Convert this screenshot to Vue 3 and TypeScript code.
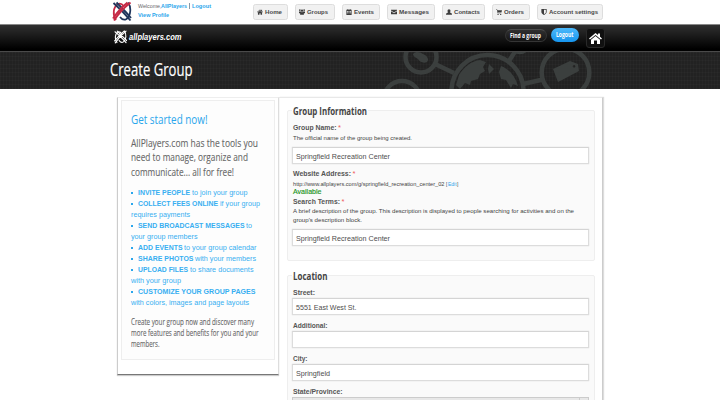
<script setup lang="ts">
import { h, type FunctionalComponent } from 'vue'

const Fit: FunctionalComponent<{ t: string; w: number; lh?: number }> = (p) => {
  const lh = p.lh ?? 11
  return h('svg', { class: 'fit', width: p.w, height: lh, overflow: 'visible' }, [
    h('text', { x: 0, y: lh - 3, textLength: p.w, lengthAdjust: 'spacingAndGlyphs' }, p.t),
  ])
}
Fit.props = ['t', 'w', 'lh']

interface NavItem { label: string; w: number; box: number; icon: string }
const nav: NavItem[] = [
  { label: 'Home', w: 17, box: 35, icon: 'M8 1 0 8l1 1.2L8 3l7 6.2L16 8l-2.500-2.200V2h-2v2ZM8 4.500l-5.500 5V15h4v-4h3v4h4V9.500Z' },
  { label: 'Groups', w: 21, box: 40, icon: 'M5 4.500a3 3 0 1 1 6 0 3 3 0 0 1-6 0ZM0 3.500a2.300 2.300 0 1 1 4.500 0 2.300 2.300 0 0 1-4.500 0ZM11.500 3.500a2.300 2.300 0 1 1 4.500 0 2.300 2.300 0 0 1-4.500 0ZM0 6.500h5l2 2h2l2-2h5V11h-3v4H3v-4H0Z' },
  { label: 'Events', w: 20, box: 38, icon: 'M1 2h3V0h2v2h4V0h2v2h3v14H1ZM2.500 6v2h3V6Zm4 0v2h3V6Zm4 0v2h3V6Zm-8 3.500v2h3v-2Zm4 0v2h3v-2Zm4 0v2h3v-2Z' },
  { label: 'Messages', w: 30, box: 48, icon: 'M0 2h16v2L8 9 0 4ZM0 6l8 5 8-5v8H0Z' },
  { label: 'Contacts', w: 26, box: 43, icon: 'M4 4.500a4 4 0 1 1 8 0c0 2-1 4-2 4.500 4 1 6 2 6 6H0c0-4 2-5 6-6-1-.5-2-2.500-2-4.500Z' },
  { label: 'Orders', w: 20, box: 38, icon: 'M0 1h3l1 2h12l-1.500 6.500H5.500l.3 1.500H14v1H4.500L2.500 2.500H0ZM4 13h3v3H4Zm7 0h3v3h-3Z' },
  { label: 'Account settings', w: 49, box: 66, icon: 'M1 0h14v8c0 4-4 6.500-7 8-3-1.500-7-4-7-8ZM8 2v11.500c3-1.500 5-3 5-5.500V2Z' },
]

interface Perk { bold: string; bw: number; rest: string; rw: number; next?: string; nw?: number }
const perks: Perk[] = [
  { bold: 'INVITE PEOPLE', bw: 52, rest: 'to join your group', rw: 55.5 },
  { bold: 'COLLECT FEES ONLINE', bw: 80, rest: 'if your group', rw: 40, next: 'requires payments', nw: 59 },
  { bold: 'SEND BROADCAST MESSAGES', bw: 106.5, rest: 'to', rw: 6, next: 'your group members', nw: 66.5 },
  { bold: 'ADD EVENTS', bw: 44.5, rest: 'to your group calendar', rw: 72.5 },
  { bold: 'SHARE PHOTOS', bw: 55.5, rest: 'with your members', rw: 61 },
  { bold: 'UPLOAD FILES', bw: 50, rest: 'to share documents', rw: 63.5, next: 'with your group', nw: 50 },
  { bold: 'CUSTOMIZE YOUR GROUP PAGES', bw: 117.5, rest: '', rw: 0, next: 'with colors, images and page layouts', nw: 118 },
]

interface Address { label: string; lw: number; value: string; vw: number }
const address: Address[] = [
  { label: 'Street:', lw: 22, value: '5551 East West St.', vw: 60.5 },
  { label: 'Additional:', lw: 34.5, value: '', vw: 0 },
  { label: 'City:', lw: 14.5, value: 'Springfield', vw: 34 },
]
</script>

<template>
  <div class="page">
    <div class="top">
      <svg class="emblem" viewBox="0 0 40 42">
        <g fill="none">
          <path d="M8 38C1 28 2 12 12 6c5-2 9 1 12 5" stroke="#c62a46" stroke-width="3.500" />
          <path d="M32 3c7 9 6 26-3 33-5 3-10 0-13-4" stroke="#20365c" stroke-width="3.500" />
          <path d="M3 4c9 8 24 23 34 35M9 3c8 8 21 21 29 31" stroke="#20365c" stroke-width="3.800" />
          <path d="M37 3C26 12 13 25 4 39M31 3C21 11 10 23 2 35" stroke="#c62a46" stroke-width="3.800" />
        </g>
      </svg>
      <div class="user">
        <div class="row"><Fit t="Welcome," :w="23.5" :lh="9" /><Fit class="link" t="AllPlayers" :w="26" :lh="9" /><span class="sep" /><Fit class="link" t="Logout" :w="19" :lh="9" /></div>
        <Fit class="link" t="View Profile" :w="31" :lh="9" />
      </div>
      <nav class="nav">
        <a v-for="n in nav" :key="n.label" class="tab" :style="{ width: n.box + 'px' }">
          <svg class="glyph" viewBox="0 0 16 16"><path :d="n.icon" fill-rule="evenodd" /></svg>
          <Fit :t="n.label" :w="n.w" :lh="9" />
        </a>
      </nav>
    </div>

    <header class="brand">
      <svg class="mark" viewBox="0 0 40 42">
        <g fill="none" stroke="#fff" stroke-width="3.500" stroke-linecap="round">
          <path d="M9 38C2 29 2 12 12 6c5-2 9 1 12 5M32 3c7 9 6 26-3 33-5 3-10 0-13-4" />
          <path d="M3 5c9 7 24 22 34 33M10 3c8 8 20 19 29 29M37 3C26 12 13 25 4 39M31 3C21 11 10 23 2 33" />
        </g>
      </svg>
      <Fit class="wordmark" t="allplayers.com" :w="52.5" :lh="12" />
      <div class="actions">
        <a class="pill dark"><Fit t="Find a group" :w="31" /></a>
        <a class="pill blue"><Fit t="Logout" :w="17.5" /></a>
        <a class="home">
          <svg width="13" height="11" viewBox="0 0 26 22" fill="#fff"><path d="M13 0 0 11l2 2L13 4l11 9 2-2-4-3.500V1h-4v3ZM13 6 4 13.500V22h6v-7h6v7h6v-8.500Z" /></svg>
        </a>
      </div>
    </header>

    <div class="hero">
      <Fit class="title" t="Create Group" :w="82.5" :lh="20" />
      <svg class="network" width="220" height="37" viewBox="380 52 220 37">
        <g fill="none" stroke="#3b3f3e" stroke-width="4.500">
          <circle cx="421" cy="57" r="15.500" />
          <circle cx="402" cy="99" r="18" />
          <circle cx="487.500" cy="91" r="36" />
          <circle cx="565.500" cy="72.500" r="23.800" />
          <circle cx="520" cy="44" r="8" />
          <path d="M435 64l19 9M509 61l7-11M523 84l20-4.500" />
        </g>
        <g fill="#3b3f3e">
          <path d="M413 54c4-4 8-1 12 1 3 2 4 5 2 7-4 2-8-1-9-3-2-1-5-3-5-5Z" />
          <path d="M459 75c5-8 12-14 21-15l6 2-3 5 2 4-5 3-2 5-7 2-1 4-5-2-5 6-4-4Z" />
          <path d="M489 64l5 5-5 5-1-5ZM501 66c8 3 14 10 17 20l-5-2-2 4-5-8-5-1-2-7Z" />
          <path fill-rule="evenodd" d="M553 69l17-8 8 3 1 7-17 9-4 2Zm21-4a1.300 1.300 0 1 0 .1 0Z" />
        </g>
      </svg>
    </div>

    <main class="body">
      <aside class="side">
        <div class="inner">
          <Fit class="started" t="Get started now!" :w="76.5" :lh="16" />
          <div class="intro">
            <Fit t="AllPlayers.com has the tools you" :w="127" :lh="14.600" />
            <Fit t="need to manage, organize and" :w="117" :lh="14.600" />
            <Fit t="communicate... all for free!" :w="103" :lh="14.600" />
          </div>
          <ul class="perks">
            <li v-for="p in perks" :key="p.bold">
              <div class="row"><i class="dot" /><Fit class="b" :t="p.bold" :w="p.bw" /><Fit v-if="p.rest" class="rest" :t="p.rest" :w="p.rw" /></div>
              <Fit v-if="p.next" :t="p.next" :w="p.nw ?? 0" />
            </li>
          </ul>
          <div class="outro">
            <Fit t="Create your group now and discover many" :w="123" />
            <Fit t="more features and benefits for you and your" :w="127.5" />
            <Fit t="members." :w="28.5" />
          </div>
        </div>
      </aside>

      <section class="form">
        <div class="set info">
          <div class="legend"><Fit t="Group Information" :w="74" :lh="12" /></div>
          <div class="row label first"><Fit t="Group Name:" :w="43.5" :lh="10" /><span class="star">*</span></div>
          <Fit class="hint" t="The official name of the group being created." :w="119" :lh="10" />
          <div class="input name"><Fit t="Springfield Recreation Center" :w="94" /></div>
          <div class="row label web"><Fit t="Website Address:" :w="58" :lh="10" /><span class="star">*</span></div>
          <div class="row hint"><Fit t="http://www.allplayers.com/g/springfield_recreation_center_02" :w="151.500" :lh="9.500" /><Fit class="open" t="[" :w="1.300" :lh="9.500" /><Fit class="edit" t="Edit" :w="8.500" :lh="9.500" /><Fit class="close" t="]" :w="1.300" :lh="9.500" /></div>
          <Fit class="ok" t="Available" :w="28.5" :lh="9" />
          <div class="row label"><Fit t="Search Terms:" :w="47" :lh="9.500" /><span class="star">*</span></div>
          <Fit class="hint" t="A brief description of the group. This description is displayed to people searching for activities and on the" :w="281" :lh="9.300" />
          <Fit class="hint" t="group's description block." :w="69" :lh="9.300" />
          <div class="input terms"><Fit t="Springfield Recreation Center" :w="94" /></div>
        </div>

        <div class="set place">
          <div class="legend"><Fit t="Location" :w="34.5" :lh="12" /></div>
          <div class="fields">
            <div v-for="a in address" :key="a.label" class="field">
              <Fit class="label" :t="a.label" :w="a.lw" :lh="10" />
              <div class="input"><Fit v-if="a.value" :t="a.value" :w="a.vw" /></div>
            </div>
            <div class="field">
              <Fit class="label" t="State/Province:" :w="49.5" :lh="10" />
              <div class="select"><span class="arrow" /></div>
            </div>
          </div>
        </div>
      </section>
    </main>
  </div>
</template>

<style>
body { margin: 0; overflow: hidden; background: #fff; }
</style>

<style scoped>
.page { width: 720px; height: 400px; overflow: hidden; background: #fff; font-family: "Liberation Sans", Arial, sans-serif; color: #555; box-sizing: border-box; }
.page * { box-sizing: border-box; }
.fit { display: block; flex: none; fill: currentColor; overflow: visible; }
.row { display: flex; }

.top { height: 24px; display: flex; padding-left: 112px; }
.emblem { width: 20px; height: 21px; margin-top: 1px; flex: none; }
.user { font-size: 5.8px; padding: 2.200px 0 0 5.500px; width: 121px; color: #666; flex: none; }
.link { color: #2ba6ec; font-weight: bold; }
.sep { width: 1px; height: 6px; background: #8899a8; margin: 1px 2px 0 2px; }
.nav { display: flex; gap: 7px; padding-top: 4px; flex: none; }
.tab { height: 16px; display: flex; align-items: center; padding-left: 3px; gap: 2px; background: #f1f1f1; border: 1px solid #ddd; border-radius: 2.500px; font-size: 6.200px; font-weight: bold; color: #484848; }
.glyph { width: 6px; height: 6px; fill: #3c3c3c; flex: none; }

.brand { height: 27px; border-top: 1px solid #888; background: linear-gradient(#303030, #000 92%); display: flex; padding-left: 114px; }
.mark { width: 13px; height: 14px; margin-top: 5px; }
.wordmark { margin: 6px 0 0 2px; font-size: 8.800px; font-weight: bold; font-style: italic; color: #fff; }
.actions { display: flex; margin-left: 323px; padding-top: 3px; }
.pill { font-family: "Open Sans", sans-serif; font-weight: bold; font-size: 7px; color: #fff; display: flex; justify-content: center; align-items: center; border-radius: 8px; }
.pill .fit { margin-top: -1px; }
.dark { width: 42px; height: 13px; margin-top: 1px; background: linear-gradient(#303030, #151515); border: 1px solid #353535; border-top-color: #4a4a4a; }
.blue { width: 28px; height: 14px; margin: 0 0 0 4.500px; background: linear-gradient(#4cb9fb, #1695ee); }
.home { width: 19px; height: 20px; margin-left: 7px; border: 1px solid #292929; border-radius: 3px; background: #101010; display: flex; align-items: center; justify-content: center; }

.hero { height: 38px; border-top: 1px solid #4a4a4a; display: flex; padding-left: 110px; overflow: hidden; background: repeating-linear-gradient(90deg, #ffffff05 0 1px, transparent 1px 3px), repeating-linear-gradient(#ffffff05 0 1px, transparent 1px 4px), #222; }
.title { margin-top: 6.600px; font-family: "Open Sans", sans-serif; font-size: 18px; color: #fff; stroke: #fff; stroke-width: .2px; }
.network { margin-left: 187.500px; flex: none; }

.body { display: flex; align-items: flex-start; padding: 8px 0 0 117px; }
.side { width: 162px; height: 278px; padding: 2px 3px 0; border: 1px solid #ddd; border-top-color: #eee; border-left-color: #ccc; border-bottom: 1.500px solid #777; box-shadow: 0 1px 1px #ccc; background: #fff; }
.inner { height: 260px; border: 1px solid #eee; background: #fdfdfd; padding: 9.500px 0 0 9px; font-family: "Open Sans", sans-serif; }
.started { font-size: 13px; color: #2ba6ec; }
.intro { padding-top: 8.200px; font-size: 10.800px; color: #666; stroke: #666; stroke-width: .1px; }
.perks { list-style: none; margin: 0; padding: 8.600px 0 0; font-family: "Liberation Sans", sans-serif; font-size: 7.300px; color: #38aff1; }
.dot { width: 2px; height: 2px; background: #2ba6ec; margin: 5px 4.500px 0 0; }
.b { font-weight: bold; }
.rest { margin-left: 2.300px; }
.outro { padding-top: 8.500px; font-size: 8.200px; color: #666; stroke: #666; stroke-width: .1px; }

.form { width: 324px; height: 400px; border: 1px solid #e8e8e8; border-left: 0; border-right: 1px solid #ccc; box-shadow: 1px 0 1px #ddd; padding: 12px 0 0 8px; }
.set { width: 308px; border: 1px solid #eee; border-radius: 2px; background: #fafafa; padding: 0 5px 0 4px; }
.info { height: 151px; }
.place { height: 160px; margin-top: 14px; }
.legend { width: max-content; height: 12px; margin: -5.400px 0 0 -.5px; padding: 0 1px; background: linear-gradient(#fff 42%, #fafafa 42%); font-family: "Open Sans", sans-serif; font-weight: bold; font-size: 10.800px; color: #444; }
.label { margin-left: .5px; font-size: 7.200px; font-weight: bold; color: #555; }
.first { margin-top: 4.900px; }
.web { margin-top: 5px; }
.star { color: #ee5a5a; font-size: 7.500px; line-height: 9px; margin-left: 2px; font-weight: normal; }
.hint { margin-left: .5px; font-size: 6px; color: #444; }
.open { margin-left: 2px; }
.edit { margin-left: .4px; color: #2ba6ec; }
.close { margin-left: .4px; }
.ok { margin-left: .5px; font-size: 7.200px; color: #1b9422; stroke: #1b9422; stroke-width: .15px; }
.input { height: 17px; border: 1px solid #dcdcdc; border-top-color: #d4d4d4; background: #fff; box-shadow: 0 0 1px #ccc; padding: 3.200px 0 0 3px; font-size: 7.200px; color: #4e4e4e; }
.name { margin-top: 4px; }
.terms { margin-top: 4px; }
.fields { padding-top: 5.300px; display: flex; flex-direction: column; gap: 6px; }
.field { display: flex; flex-direction: column; }
.select { height: 17px; border: 1px solid #ccc; background: #e8e8e8; display: flex; justify-content: flex-end; }
.arrow { width: 9px; border-left: 1px solid #ccc; }
</style>
